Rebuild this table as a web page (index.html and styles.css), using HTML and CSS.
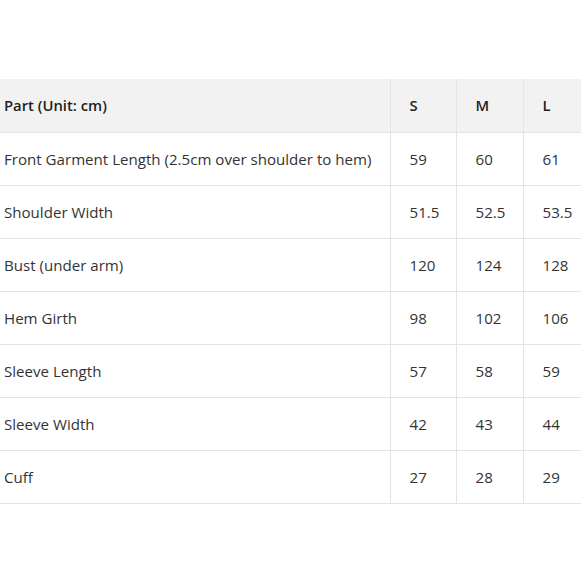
FILE: index.html
```html
<!DOCTYPE html>
<html>
<head>
<meta charset="utf-8">
<link rel="stylesheet" href="styles.css">
</head>
<body>
<div class="page">
<table class="size-table">
  <thead>
    <tr><th class="part">Part (Unit: cm)</th><th>S</th><th>M</th><th>L</th></tr>
  </thead>
  <tbody>
    <tr><td class="part">Front Garment Length (2.5cm over shoulder to hem)</td><td>59</td><td>60</td><td>61</td></tr>
    <tr><td class="part">Shoulder Width</td><td>51.5</td><td>52.5</td><td>53.5</td></tr>
    <tr><td class="part">Bust (under arm)</td><td>120</td><td>124</td><td>128</td></tr>
    <tr><td class="part">Hem Girth</td><td>98</td><td>102</td><td>106</td></tr>
    <tr><td class="part">Sleeve Length</td><td>57</td><td>58</td><td>59</td></tr>
    <tr><td class="part">Sleeve Width</td><td>42</td><td>43</td><td>44</td></tr>
    <tr><td class="part">Cuff</td><td>27</td><td>28</td><td>29</td></tr>
  </tbody>
</table>
</div>
</body>
</html>
```
FILE: styles.css
```css
html, body {
  margin: 0;
  padding: 0;
  background: #ffffff;
}
.page {
  width: 581px;
  height: 581px;
  overflow: hidden;
  padding-top: 79px;
  box-sizing: border-box;
}
.size-table {
  border-collapse: collapse;
  table-layout: fixed;
  width: 590px;
  font-family: "Open Sans", "Noto Sans", sans-serif;
  font-size: 15.1px;
  color: #333333;
}
.size-table th,
.size-table td {
  height: 53px;
  padding: 0 0 0 19px;
  text-align: left;
  border-bottom: 1px solid #e4e4e4;
  border-left: 1px solid #e4e4e4;
  box-sizing: border-box;
  white-space: nowrap;
}
.size-table th {
  background: #f2f2f2;
  font-weight: 600;
  font-size: 14.8px;
  color: #1e1e1e;
}
.size-table .part {
  width: 390px;
  padding-left: 4px;
  border-left: none;
}
.size-table th:nth-child(2), .size-table td:nth-child(2) { width: 66px; }
.size-table th:nth-child(3), .size-table td:nth-child(3) { width: 67px; }
.size-table th:nth-child(4), .size-table td:nth-child(4) { width: 67px; }
```
